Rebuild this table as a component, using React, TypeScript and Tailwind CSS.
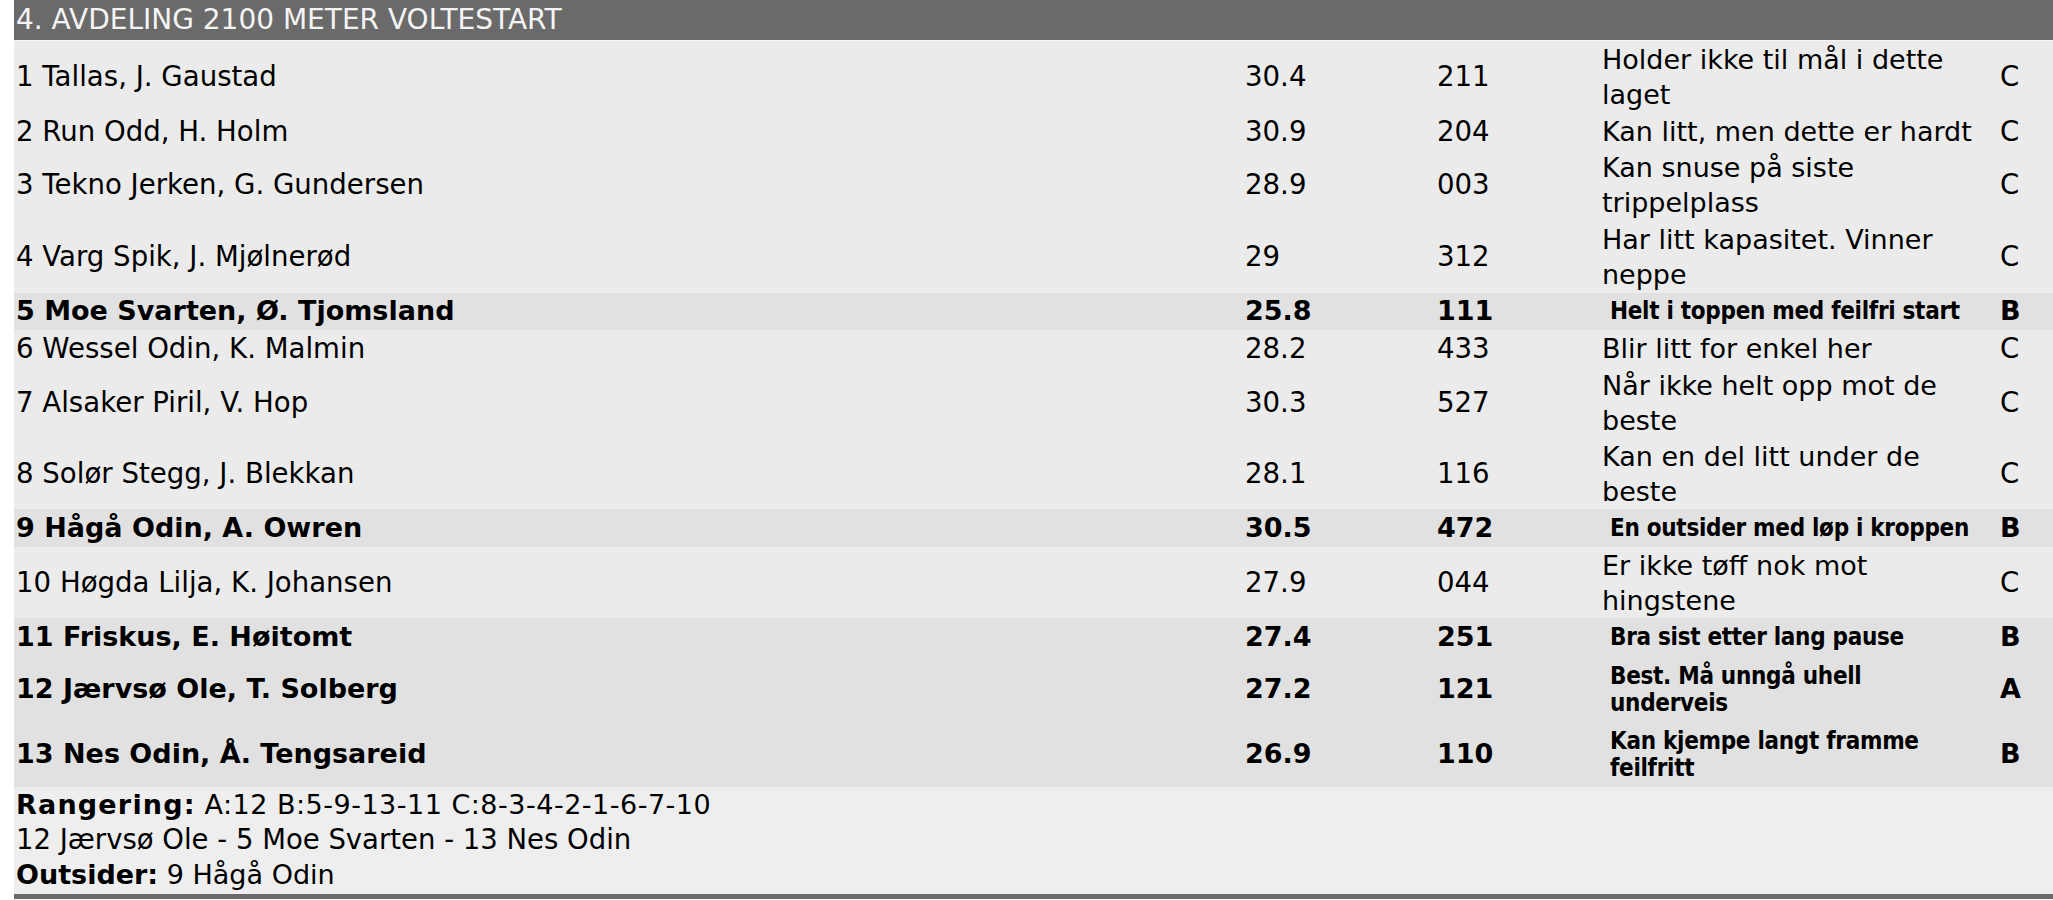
// App.tsx
type Row = {
  name: string;
  time: string;
  num: string;
  desc: string[];
  grade: string;
  bold?: boolean;
  h: string;
};

const rows: Row[] = [
  { name: "1 Tallas, J. Gaustad", time: "30.4", num: "211", desc: ["Holder ikke til mål i dette", "laget"], grade: "C", h: "h-[72px]" },
  { name: "2 Run Odd, H. Holm", time: "30.9", num: "204", desc: ["Kan litt, men dette er hardt"], grade: "C", h: "h-[37px]" },
  { name: "3 Tekno Jerken, G. Gundersen", time: "28.9", num: "003", desc: ["Kan snuse på siste", "trippelplass"], grade: "C", h: "h-[70px]" },
  { name: "4 Varg Spik, J. Mjølnerød", time: "29", num: "312", desc: ["Har litt kapasitet. Vinner", "neppe"], grade: "C", h: "h-[73px]" },
  { name: "5 Moe Svarten, Ø. Tjomsland", time: "25.8", num: "111", desc: ["Helt i toppen med feilfri start"], grade: "B", bold: true, h: "h-[37px]" },
  { name: "6 Wessel Odin, K. Malmin", time: "28.2", num: "433", desc: ["Blir litt for enkel her"], grade: "C", h: "h-[37px]" },
  { name: "7 Alsaker Piril, V. Hop", time: "30.3", num: "527", desc: ["Når ikke helt opp mot de", "beste"], grade: "C", h: "h-[71px]" },
  { name: "8 Solør Stegg, J. Blekkan", time: "28.1", num: "116", desc: ["Kan en del litt under de", "beste"], grade: "C", h: "h-[71px]" },
  { name: "9 Hågå Odin, A. Owren", time: "30.5", num: "472", desc: ["En outsider med løp i kroppen"], grade: "B", bold: true, h: "h-[38px]" },
  { name: "10 Høgda Lilja, K. Johansen", time: "27.9", num: "044", desc: ["Er ikke tøff nok mot", "hingstene"], grade: "C", h: "h-[71px]" },
  { name: "11 Friskus, E. Høitomt", time: "27.4", num: "251", desc: ["Bra sist etter lang pause"], grade: "B", bold: true, h: "h-[39px]" },
  { name: "12 Jærvsø Ole, T. Solberg", time: "27.2", num: "121", desc: ["Best. Må unngå uhell", "underveis"], grade: "A", bold: true, h: "h-[65px]" },
  { name: "13 Nes Odin, Å. Tengsareid", time: "26.9", num: "110", desc: ["Kan kjempe langt framme", "feilfritt"], grade: "B", bold: true, h: "h-[65px]" },
];

function RaceRow({ r }: { r: Row }) {
  return (
    <div
      className={`flex items-center pl-[2px] ${r.h} ${
        r.bold ? "bg-[#e1e1e1] font-bold text-[27px]" : "bg-[#ebebeb] text-[27.6px]"
      }`}
    >
      <div className="w-[1229px] whitespace-nowrap">{r.name}</div>
      <div className="w-[192px]">{r.time}</div>
      <div className="w-[165px]">{r.num}</div>
      <div className="w-[398px]">
        {r.bold ? (
          <div className="ml-[8px] font-['DejaVu_Sans_Condensed','DejaVu_Sans',sans-serif] font-stretch-condensed text-[24px] leading-[27px] tracking-[-0.3px]">
            {r.desc.map((l) => (
              <div key={l} className="whitespace-nowrap">{l}</div>
            ))}
          </div>
        ) : (
          <div className="text-[27px] leading-[35px]">
            {r.desc.map((l) => (
              <div key={l} className="whitespace-nowrap">{l}</div>
            ))}
          </div>
        )}
      </div>
      <div>{r.grade}</div>
    </div>
  );
}

export default function App() {
  return (
    <div className="min-h-[900px] bg-white pl-[14px] font-['DejaVu_Sans',sans-serif] text-[27px] text-black">
      {/* Heading bar */}
      <div className="h-[40px] bg-[#6a6a6a] pl-[2px] text-[28px] leading-[40px] text-[#f4f4f4] border-b border-[#f6f6f6] box-content">
        4. AVDELING 2100 METER VOLTESTART
      </div>

      {/* Runners */}
      <div className="flex flex-col">
        {rows.map((r) => (
          <RaceRow key={r.name} r={r} />
        ))}
      </div>

      {/* Summary */}
      <div className="bg-[#eeeeee] pl-[2px] leading-[35px] pb-[2px] border-b-[5px] border-[#6a6a6a]">
        <div className="whitespace-nowrap">
          <span className="font-bold tracking-[1.2px]">Rangering:</span>{" "}
          <span className="tracking-[0.5px]">A:12 B:5-9-13-11 C:8-3-4-2-1-6-7-10</span>
        </div>
        <div className="text-[27.5px]">12 Jærvsø Ole - 5 Moe Svarten - 13 Nes Odin</div>
        <div>
          <span className="font-bold">Outsider:</span> 9 Hågå Odin
        </div>
      </div>
    </div>
  );
}
